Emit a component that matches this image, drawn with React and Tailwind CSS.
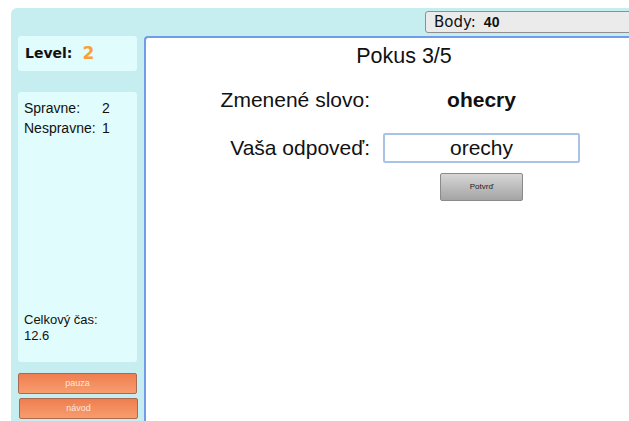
import React from "react";

// Word-scramble game screen: score header, side stats and the answer panel
function Sidebar() {
  return (
    <div className="w-[119px] ml-[7px] flex flex-col shrink-0">
      <div className="h-[35px] bg-[#e0fcfc] rounded-[3px] flex items-center pl-[7px] gap-[10px]">
        <span className="font-['DejaVu_Sans',sans-serif] font-bold text-[14px] text-[#111]">Level:</span>
        <span className="font-['DejaVu_Sans',sans-serif] font-bold text-[17px] text-[#f7a13a] leading-none">2</span>
      </div>
      <div className="mt-[21px] h-[270px] bg-[#e0fcfc] rounded-[3px] flex flex-col justify-between pt-[6px] pb-[18px] pl-[6px] text-[#111]">
        <div className="flex flex-col text-[14px] leading-[20px]">
          <div className="flex">
            <span className="w-[78px]">Spravne:</span>
            <span>2</span>
          </div>
          <div className="flex">
            <span className="w-[78px]">Nespravne:</span>
            <span>1</span>
          </div>
        </div>
        <div className="flex flex-col text-[13px] leading-[16px]">
          <span>Celkový čas:</span>
          <span>12.6</span>
        </div>
      </div>
      <button className="mt-[11px] h-[21px] w-[119px] rounded-[2px] border border-[#a86a50] bg-gradient-to-b from-[#ef7e50] to-[#f79d6e] text-[9px] text-[#fde7da]">
        pauza
      </button>
      <button className="mt-[4px] ml-[1px] h-[21px] w-[119px] rounded-[2px] border border-[#a86a50] bg-gradient-to-b from-[#ef7e50] to-[#f79d6e] text-[9px] text-[#fde7da]">
        návod
      </button>
    </div>
  );
}

function GamePanel() {
  return (
    <div className="ml-[7px] w-[518px] h-[400px] shrink-0 bg-white border-l-2 border-t-2 border-[#6f9de8] rounded-tl-[4px] flex flex-col items-center">
      <div className="mt-[5px] text-[21.5px] text-[#111] leading-[26px]">Pokus 3/5</div>
      <div className="mt-[18px] w-full grid grid-cols-[224px_197px] gap-x-[13px] items-center">
        <div className="text-right text-[21px] text-[#111] leading-[26px]">Zmenené slovo:</div>
        <div className="text-center text-[21px] font-bold text-[#111] leading-[26px]">ohecry</div>
        <div className="mt-[20px] text-right text-[21px] text-[#111] leading-[26px]">Vaša odpoveď:</div>
        <div className="mt-[20px] h-[30px] border-2 border-[#a9c3e6] rounded-[2px] flex items-center justify-center text-[21px] text-[#111]">
          orechy
        </div>
        <div />
        <div className="flex justify-center mt-[10px]">
          <button className="w-[83px] h-[28px] border border-[#8a8a8a] rounded-[2px] bg-gradient-to-b from-[#d6d6d6] to-[#a4a4a4] text-[8px] text-[#222]">
            Potvrď
          </button>
        </div>
      </div>
    </div>
  );
}

export default function App() {
  return (
    <div className="w-[629px] h-[421px] overflow-hidden bg-white font-['Liberation_Sans',Arial,sans-serif]">
      <div className="ml-[11px] mt-[8px] w-[640px] h-[420px] bg-[#c6eef0] rounded-tl-[6px] flex flex-col">
        <div className="h-[28px] shrink-0 flex items-start">
          <div className="ml-[414px] mt-[3px] h-[22px] w-[220px] bg-[#ebebeb] border border-[#8f8f8f] rounded-[3px] flex items-center pl-[8px] gap-[8px] text-[#111]">
            <span className="font-['DejaVu_Sans',sans-serif] text-[15px]">Body:</span>
            <span className="font-bold text-[14px]">40</span>
          </div>
        </div>
        <div className="flex">
          <Sidebar />
          <GamePanel />
        </div>
      </div>
    </div>
  );
}
